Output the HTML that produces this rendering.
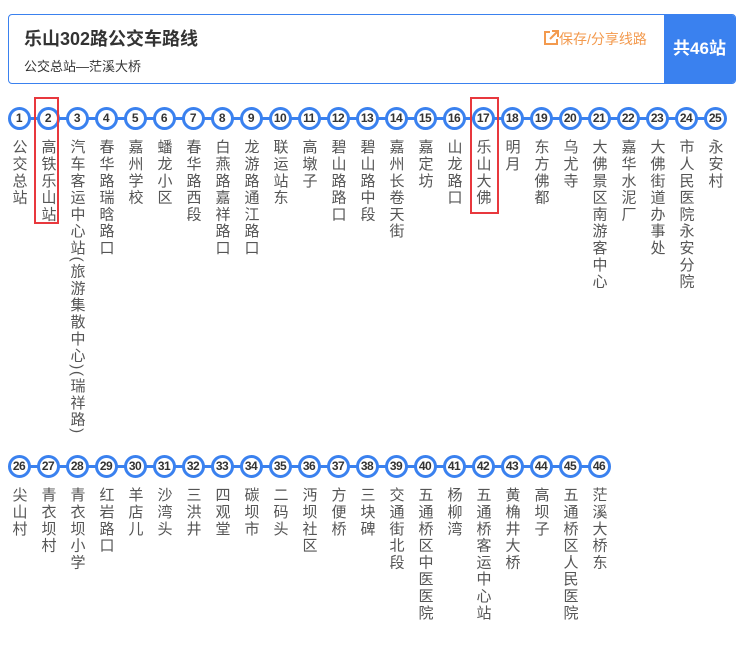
<!DOCTYPE html>
<html><head><meta charset="utf-8"><style>
*{margin:0;padding:0;box-sizing:border-box}
body{width:740px;height:646px;background:#fff;position:relative;font-family:"Liberation Sans","Noto Sans CJK SC",sans-serif;overflow:hidden}
.hd{position:absolute;left:8px;top:14px;width:728px;height:70px;border:1px solid #3a81ef;border-radius:4px;overflow:hidden}
.t1{position:absolute;left:15px;top:10px;font-size:18px;font-weight:bold;color:#333}
.t2{position:absolute;left:15px;top:41px;font-size:13px;color:#333}
.sh{position:absolute;left:534px;top:14px;font-size:14px;color:#f39a4e}
.tot{position:absolute;right:0;top:0;width:71px;height:68px;background:#3a81ef;color:#fff;font-weight:bold;font-size:17px;text-align:center;line-height:68px}
.line{position:absolute;left:19px;width:696px;height:3px;background:#3a81ef}
.c{position:absolute;width:23px;height:23px;border:3px solid #3a81ef;border-radius:50%;background:#fff;font-size:12px;font-weight:bold;color:#333;text-align:center;line-height:17px;letter-spacing:-0.5px}
.n{position:absolute;writing-mode:vertical-lr;font-size:15px;letter-spacing:1.8px;color:#555;line-height:15px}
.rb{position:absolute;border:2px solid #e8383d}
</style></head><body>
<div class="hd">
<div class="t1">乐山302路公交车路线</div>
<div class="t2">公交总站—茫溪大桥</div>
<div class="sh"><svg width="16" height="16" viewBox="0 0 16 16" style="vertical-align:-2px"><path d="M7 2H2v12h12V9" fill="none" stroke="#f39a4e" stroke-width="2"/><path d="M9 1h6v6M15 1L7 9" fill="none" stroke="#f39a4e" stroke-width="2"/></svg>保存/分享线路</div>
<div class="tot">共46站</div>
</div>
<div class="line" style="top:117px"></div>
<div class="line" style="top:465px;width:580px"></div>
<div id="s"></div>
<div class="rb" style="left:34px;top:97px;width:25px;height:127px"></div>
<div class="rb" style="left:470px;top:97px;width:29px;height:117px"></div>
<script>
var names=["公交总站","高铁乐山站","汽车客运中心站(旅游集散中心)(瑞祥路)","春华路瑞晗路口","嘉州学校","蟠龙小区","春华路西段","白燕路嘉祥路口","龙游路通江路口","联运站东","高墩子","碧山路路口","碧山路中段","嘉州长卷天街","嘉定坊","山龙路口","乐山大佛","明月","东方佛都","乌尤寺","大佛景区南游客中心","嘉华水泥厂","大佛街道办事处","市人民医院永安分院","永安村","尖山村","青衣坝村","青衣坝小学","红岩路口","羊店儿","沙湾头","三洪井","四观堂","碳坝市","二码头","沔坝社区","方便桥","三块碑","交通街北段","五通桥区中医医院","杨柳湾","五通桥客运中心站","黄桷井大桥","高坝子","五通桥区人民医院","茫溪大桥东"];
var h="";
for(var i=0;i<46;i++){var r=i<25?0:1,k=i<25?i:i-25,x=19+29*k,y=r?466:118;
h+='<div class="c" style="left:'+(x-11.5)+'px;top:'+(y-11.5)+'px">'+(i+1)+'</div>';
h+='<div class="n" style="left:'+(x-7.5)+'px;top:'+(y+21)+'px">'+names[i]+'</div>';}
document.getElementById("s").innerHTML=h;
</script>
</body></html>
